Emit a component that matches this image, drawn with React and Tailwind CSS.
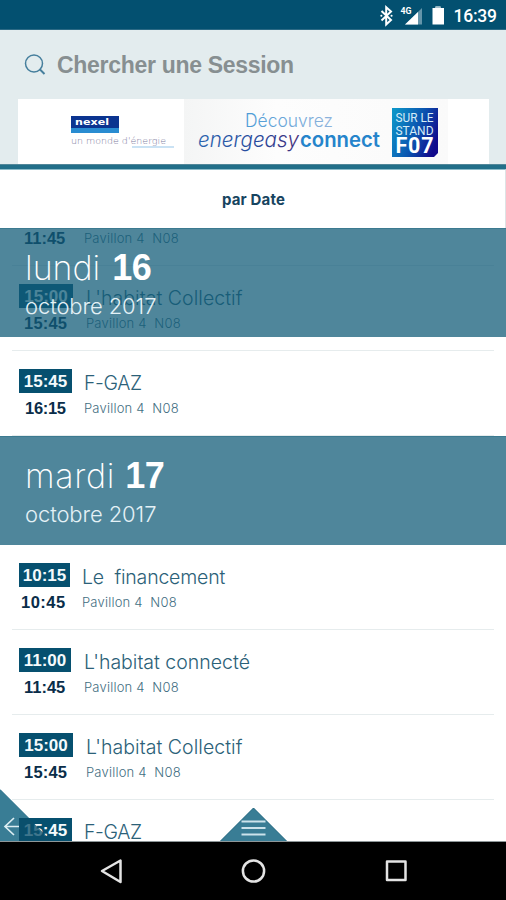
const sessions = {
  connecte: { start: '11:00', end: '11:45', title: "L'habitat connecté", badge: 'w-[52px]', gap: 'pl-[13px]', endStyle: 'pl-[5px] tracking-[0px]', titleStyle: 'tracking-[0px]' },
  collectif: { start: '15:00', end: '15:45', title: "L'habitat Collectif", badge: 'w-[54px]', gap: 'pl-[13px]', endStyle: 'pl-[5px] tracking-[0.2px]', titleStyle: 'tracking-[0.05px]' },
  fgaz: { start: '15:45', end: '16:15', title: 'F-GAZ', badge: 'w-[53px]', gap: 'pl-[12px]', endStyle: 'pl-[6px] tracking-[-0.3px]', titleStyle: 'tracking-[-0.4px]' },
  financement: { start: '10:15', end: '10:45', title: 'Le  financement', badge: 'w-[51px]', gap: 'pl-[12px]', endStyle: 'pl-[2px] tracking-[0.5px]', titleStyle: 'tracking-[-0.2px]' },
};

function SessionRow({ session }) {
  return (
    <div className="h-[85px] shrink-0 pl-[19px] pr-3 relative">
      <div className="flex pt-[18px]">
        <div className="shrink-0 font-bold text-[17px] leading-[24px]">
          <div className={`${session.badge} h-[24px] bg-[#06506f] text-[#f4fafc] text-center pt-px`}>{session.start}</div>
          <div className={`${session.endStyle} mt-[3px] text-[#0a2d49] text-[16.5px]`}>{session.end}</div>
        </div>
        <div className={`${session.gap} pt-px font-['Inter',sans-serif] font-light`}>
          <div className={`${session.titleStyle} whitespace-pre text-[19.5px] leading-[26px] text-[#2b6178]`}>{session.title}</div>
          <div className="whitespace-pre text-[13px] leading-[24px] tracking-[0.2px] text-[#3f6e82]">{'Pavillon 4  N08'}</div>
        </div>
      </div>
      <div className="absolute bottom-0 left-3 right-3 h-px bg-[#e6eced]" />
    </div>
  );
}

function DayHeader({ day, number, className, dayStyle }) {
  return (
    <div className={`h-[109px] w-full shrink-0 pl-[25px] pt-[17px] text-white border-t border-[#3c7a90] ${className}`}>
      <div className="flex items-baseline h-[44px] leading-[44px]">
        <span className={`font-['Inter',sans-serif] font-extralight text-[34px] ${dayStyle}`}>{day}</span>
        <span className="font-bold text-[36px] tracking-[-0.5px]">{number}</span>
      </div>
      <div className="font-['Inter',sans-serif] font-light text-[22px] leading-[32px] tracking-[-0.1px] text-[#e4f1f6]">octobre 2017</div>
    </div>
  );
}

function StatusBar() {
  return (
    <div className="h-[30px] shrink-0 bg-[#035070] border-b border-[#2c6a85] flex">
      <svg className="w-full h-[30px]" viewBox="0 0 506 30">
        <path d="M381.500 11l9.500 9-4.800 4.400V7.200l4.800 4.300-9.500 9" fill="none" stroke="#fff" strokeWidth="2" />
        <path d="M381.300 15.700h.1M391.500 15.700h.1" stroke="#fff" strokeWidth="2" strokeLinecap="round" />
        <path d="M405 24.500L422 8v16.500z" fill="#6595aa" />
        <path d="M405 24.500L418 12v12.500z" fill="#fff" />
        <text x="400.500" y="13.500" fontFamily="Roboto, sans-serif" fontWeight="700" fontSize="9" fill="#fff" textLength="11" lengthAdjust="spacingAndGlyphs">4G</text>
        <path d="M435.500 6.500h5v1.500h3.500v16.500h-11.500V8h3z" fill="#fff" />
        <path d="M435.500 6.500h5v1.500h-5z" fill="#a5c0cc" />
        <text x="453.500" y="22" fontFamily="Roboto, sans-serif" fontWeight="500" fontSize="17.500" fill="#fff" textLength="43.500">16:39</text>
      </svg>
    </div>
  );
}

function Banner() {
  return (
    <svg className="block ml-[18px] w-[471px] h-[65px]" viewBox="18 99 471 65">
      <defs>
        <linearGradient id="panel"><stop offset="0" stopColor="#f4f5f5" /><stop offset=".35" stopColor="#fdfdfd" /><stop offset="1" stopColor="#fafafa" /></linearGradient>
        <linearGradient id="stand" x1="0" y1=".2" x2="1" y2=".6"><stop offset="0" stopColor="#0d94c8" /><stop offset=".55" stopColor="#0b55b0" /><stop offset="1" stopColor="#120a8c" /></linearGradient>
        <linearGradient id="decouvrez"><stop offset="0" stopColor="#4b9bd6" /><stop offset="1" stopColor="#90b4dc" /></linearGradient>
        <linearGradient id="energeasy"><stop offset="0" stopColor="#2b63ae" /><stop offset=".6" stopColor="#27489b" /><stop offset="1" stopColor="#452f7b" /></linearGradient>
      </defs>
      <path fill="#fff" d="M18 99h471v65H18z" />
      <path fill="url(#panel)" d="M184 99h264v65H184z" />
      <path fill="#0b3490" d="M71 116h48v12H71z" />
      <path fill="#298cd1" d="M71 128h48v5H71z" />
      <text x="75" y="125" fontFamily="DejaVu Sans, sans-serif" fontWeight="700" fontSize="9.500" fill="#fff" textLength="34" lengthAdjust="spacingAndGlyphs">nexel</text>
      <text x="71" y="144" fontFamily="DejaVu Sans, sans-serif" fontWeight="200" fontSize="8.500" fill="#7e7c9e" textLength="95" lengthAdjust="spacingAndGlyphs">un monde d'énergie</text>
      <path d="M132 147h42" stroke="#95c5e9" />
      <text x="245" y="127" fontFamily="Inter, sans-serif" fontWeight="300" fontSize="18" fill="url(#decouvrez)" textLength="88" lengthAdjust="spacingAndGlyphs">Découvrez</text>
      <text x="198" y="147" fontFamily="Inter, sans-serif" fontWeight="300" fontStyle="italic" fontSize="21" fill="url(#energeasy)" textLength="101" lengthAdjust="spacingAndGlyphs">energeasy</text>
      <text x="300" y="147" fontFamily="Inter, sans-serif" fontWeight="600" fontSize="20.500" fill="#2584cb" textLength="80" lengthAdjust="spacingAndGlyphs">connect</text>
      <path fill="url(#stand)" d="M392 108h46v45l-4 4h-42z" />
      <text x="395.500" y="122" fontFamily="Roboto, sans-serif" fontSize="13.500" fill="#d6ecf8" textLength="38" lengthAdjust="spacingAndGlyphs">SUR LE</text>
      <text x="395.500" y="134.500" fontFamily="Roboto, sans-serif" fontSize="13.500" fill="#d6ecf8" textLength="38" lengthAdjust="spacingAndGlyphs">STAND</text>
      <text x="395.500" y="153" fontFamily="Roboto, sans-serif" fontWeight="700" fontSize="21.500" fill="#fff" textLength="38">F07</text>
    </svg>
  );
}

function NavBar() {
  return (
    <div className="h-[58px] shrink-0 bg-black">
      <svg className="block w-full h-[58px]" viewBox="0 842 506 58" fill="none" stroke="#e4e4e4" strokeWidth="2.500" strokeLinejoin="round">
        <path d="M120.500 860.500v21.500l-18.500-11z" />
        <circle cx="253.500" cy="871" r="10.600" />
        <path d="M387 861.500h18.500v18.500H387z" />
      </svg>
    </div>
  );
}

export default function App() {
  return (
    <div className="w-[506px] h-[900px] flex flex-col overflow-hidden bg-white font-['Liberation_Sans',Arial,sans-serif]">
      <StatusBar />
      <div className="h-[134px] shrink-0 bg-[#e3ecee] flex flex-col">
        <div className="h-[69px] flex items-center pl-[24px]">
          <svg className="w-[22px] h-[22px]" viewBox="0 0 22 22" fill="none" stroke="#467f9d" strokeWidth="1.500">
            <circle cx="10" cy="9.500" r="8.500" />
            <path d="M15.500 15l5 5" strokeWidth="2" />
          </svg>
          <span className="ml-[11px] pt-px text-[23px] tracking-[-0.3px] font-bold text-[#878f91]">Chercher une Session</span>
        </div>
        <Banner />
      </div>
      <div className="h-[5px] shrink-0 bg-[#226f89] border-t border-[#528799]" />
      <div className="h-[59px] shrink-0 border-t border-[#8dbcc9] border-r border-r-[#dde3e5] flex items-center justify-center font-['Inter',sans-serif] text-[15px] tracking-[0.15px] font-bold text-[#174460] pt-[2px] pl-[2px]">par Date</div>
      <div className="h-[614px] shrink-0 relative overflow-hidden">
        <div className="-mt-[47px] flex flex-col">
          <SessionRow session={sessions.connecte} />
          <SessionRow session={sessions.collectif} />
          <SessionRow session={sessions.fgaz} />
          <DayHeader day="mardi" number="17" dayStyle="tracking-[0.7px] mr-[10px]" className="bg-[#4f869b]" />
          <SessionRow session={sessions.financement} />
          <SessionRow session={sessions.connecte} />
          <SessionRow session={sessions.collectif} />
          <SessionRow session={sessions.fgaz} />
        </div>
        <div className="absolute inset-x-0 top-0">
          <DayHeader day="lundi" number="16" dayStyle="mr-[12px]" className="bg-[#125c78]/74" />
        </div>
        <svg className="absolute left-0 bottom-0 w-[56px] h-[56px]" viewBox="0 786 56 56">
          <path d="M0 789.500L28.500 818H19v24H0z" fill="#397d95" />
          <path d="M19 818h9.500l24 24H19z" fill="#0b506c" fillOpacity=".78" />
          <path d="M0 789.500L28.500 818" stroke="#226b86" />
          <path d="M14 818l-9 8.500 9 8.500M5 826.500h14" fill="none" stroke="#dceef3" strokeWidth="1.700" />
        </svg>
        <svg className="absolute left-[218px] bottom-0 w-[72px] h-[36px]" viewBox="218 806 72 36">
          <path d="M253.500 808L287.500 842h-68z" fill="#397d95" stroke="#19617b" />
          <path d="M241.500 821.500h24M241.500 828h24M241.500 834.500h24" stroke="#cce3eb" strokeWidth="2" />
        </svg>
        <div className="absolute inset-x-0 bottom-0 h-px bg-[#8e9799]" />
      </div>
      <NavBar />
    </div>
  );
}
